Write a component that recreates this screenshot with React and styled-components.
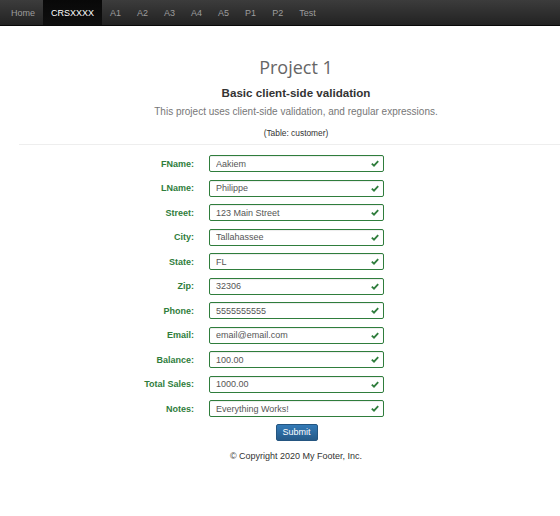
import { Fragment } from "react";
import styled, { createGlobalStyle } from "styled-components";

const GlobalStyle = createGlobalStyle`
  html, body {
    margin: 0;
    padding: 0;
    background: #fff;
    overflow: hidden;
  }
  body {
    font-family: "Liberation Sans", Arial, sans-serif;
    color: #333;
  }
`;

const Navbar = styled.nav`
  height: 26px;
  display: flex;
  align-items: stretch;
  padding-left: 3px;
  background: linear-gradient(to bottom, #3c3c3c 0%, #222 100%);
  border-bottom: 1px solid #080808;
  box-sizing: border-box;
`;

const NavItem = styled.a`
  display: flex;
  align-items: center;
  padding: 0 8px;
  font-size: 9px;
  color: ${(p) => (p.$active ? "#fff" : "#9d9d9d")};
  background: ${(p) =>
    p.$active ? "linear-gradient(to bottom, #080808 0%, #0f0f0f 100%)" : "none"};
  text-decoration: none;
`;

const Container = styled.main`
  width: 554px;
  margin-left: 19px;
  display: flex;
  flex-direction: column;
  align-items: center;
`;

const Header = styled.header`
  width: 100%;
  display: flex;
  flex-direction: column;
  align-items: center;
  padding-top: 29px;
  padding-bottom: 5px;
  border-bottom: 1px solid #eee;
`;

const Title = styled.h2`
  margin: 0;
  font-family: "Open Sans", sans-serif;
  font-weight: 400;
  font-size: 18px;
  line-height: 24px;
  color: #666;
`;

const Subtitle = styled.h4`
  margin: 6px 0 0;
  font-size: 11.6px;
  font-weight: 700;
  line-height: 15px;
  color: #333;
`;

const Lead = styled.p`
  margin: 5px 0 0;
  font-size: 10px;
  line-height: 14px;
  color: #777;
`;

const TableNote = styled.p`
  margin: 9px 0 0;
  font-size: 8.4px;
  line-height: 11px;
  color: #333;
`;

const Form = styled.form`
  align-self: stretch;
  display: grid;
  grid-template-columns: 175px 175px;
  column-gap: 15px;
  row-gap: 7.5px;
  padding-top: 10px;
`;

const Label = styled.label`
  display: flex;
  align-items: center;
  justify-content: flex-end;
  font-size: 9px;
  font-weight: 700;
  color: #2f7d3c;
`;

const Field = styled.div`
  position: relative;
  height: 17px;
`;

const Input = styled.input`
  display: block;
  width: 100%;
  height: 100%;
  margin: 0;
  box-sizing: border-box;
  border: 1px solid #2f7d3c;
  border-radius: 2px;
  padding: 0 20px 0 6px;
  font-family: "Liberation Sans", Arial, sans-serif;
  font-size: 9px;
  color: #555;
  box-shadow: inset 0 1px 1px rgba(0, 0, 0, 0.075);
  outline: none;
`;

const Check = styled.svg`
  position: absolute;
  right: 5px;
  top: 5px;
  width: 8px;
  height: 7px;
`;

const Actions = styled.div`
  grid-column: 2;
  display: flex;
  justify-content: center;
  margin-top: -1px;
`;

const Submit = styled.button`
  width: 42px;
  height: 17px;
  padding: 0;
  border: 1px solid #245580;
  border-radius: 2px;
  background: linear-gradient(to bottom, #337ab7 0%, #265a88 100%);
  color: #fff;
  font-family: "Liberation Sans", Arial, sans-serif;
  font-size: 9px;
`;

const Footer = styled.footer`
  margin-top: 8px;
  font-size: 9px;
  line-height: 14px;
  color: #333;
`;

const navItems = ["Home", "CRSXXXX", "A1", "A2", "A3", "A4", "A5", "P1", "P2", "Test"];

const fields = [
  ["FName", "Aakiem"],
  ["LName", "Philippe"],
  ["Street", "123 Main Street"],
  ["City", "Tallahassee"],
  ["State", "FL"],
  ["Zip", "32306"],
  ["Phone", "5555555555"],
  ["Email", "email@email.com"],
  ["Balance", "100.00"],
  ["Total Sales", "1000.00"],
  ["Notes", "Everything Works!"],
];

const CheckIcon = () => (
  <Check viewBox="0 0 8 7">
    <path d="M0.8 3.6 L3 5.7 L7.2 1.2" fill="none" stroke="#2f7d3c" strokeWidth="1.8" />
  </Check>
);

const App = () => {
  return (
    <>
      <GlobalStyle />
      <Navbar>
        {navItems.map((item) => (
          <NavItem key={item} href="#" $active={item === "CRSXXXX"}>
            {item}
          </NavItem>
        ))}
      </Navbar>
      <Container>
        <Header>
          <Title>Project 1</Title>
          <Subtitle>Basic client-side validation</Subtitle>
          <Lead>This project uses client-side validation, and regular expressions.</Lead>
          <TableNote>(Table: customer)</TableNote>
        </Header>
        <Form onSubmit={(e) => e.preventDefault()}>
          {fields.map(([label, value]) => (
            <Fragment key={label}>
              <Label>{label}:</Label>
              <Field>
                <Input defaultValue={value} />
                <CheckIcon />
              </Field>
            </Fragment>
          ))}
          <Actions>
            <Submit type="submit">Submit</Submit>
          </Actions>
        </Form>
        <Footer>© Copyright 2020 My Footer, Inc.</Footer>
      </Container>
    </>
  );
};

export default App;
